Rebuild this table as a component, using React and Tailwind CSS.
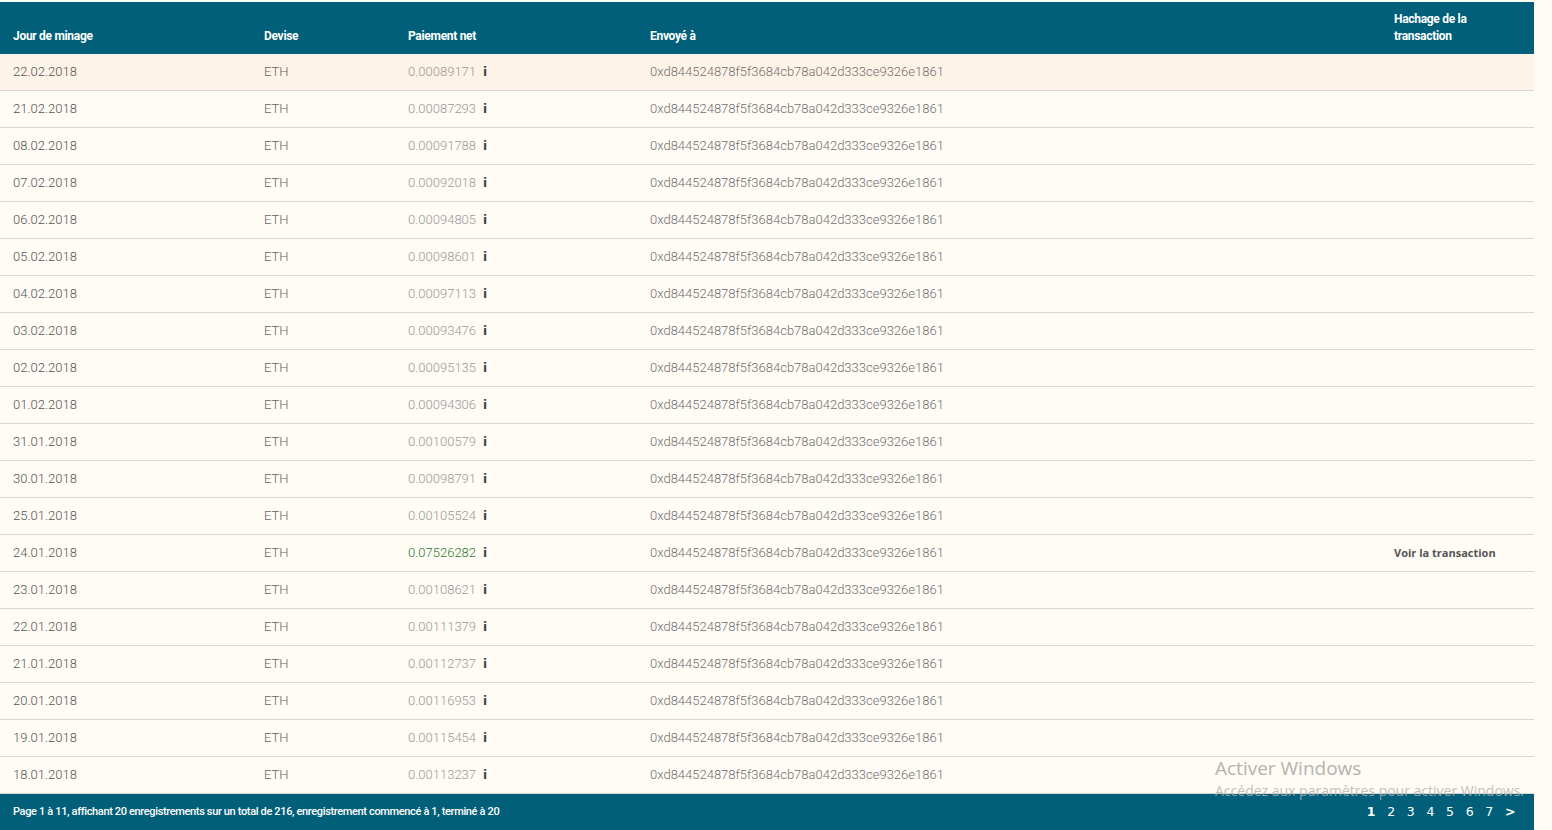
import React from "react";

const rows = [
  ["22.02.2018", "0.00089171"],
  ["21.02.2018", "0.00087293"],
  ["08.02.2018", "0.00091788"],
  ["07.02.2018", "0.00092018"],
  ["06.02.2018", "0.00094805"],
  ["05.02.2018", "0.00098601"],
  ["04.02.2018", "0.00097113"],
  ["03.02.2018", "0.00093476"],
  ["02.02.2018", "0.00095135"],
  ["01.02.2018", "0.00094306"],
  ["31.01.2018", "0.00100579"],
  ["30.01.2018", "0.00098791"],
  ["25.01.2018", "0.00105524"],
  ["24.01.2018", "0.07526282", true],
  ["23.01.2018", "0.00108621"],
  ["22.01.2018", "0.00111379"],
  ["21.01.2018", "0.00112737"],
  ["20.01.2018", "0.00116953"],
  ["19.01.2018", "0.00115454"],
  ["18.01.2018", "0.00113237"],
];

const HASH = "0xd844524878f5f3684cb78a042d333ce9326e1861";

export default function App() {
  return (
    <div
      className="relative w-[1552px] h-[830px] overflow-hidden bg-[#fffbf5] pt-[2px]"
      style={{ fontFamily: "Roboto, 'Liberation Sans', sans-serif" }}
    >
      <div className="w-[1534px]">
        <div className="flex items-end h-[52px] bg-[#015f7a] text-white font-bold text-[12px] leading-[17px] tracking-[-0.3px] pb-[9px]">
          <div className="w-[264px] pl-[13px]">Jour de minage</div>
          <div className="w-[144px]">Devise</div>
          <div className="w-[242px]">Paiement net</div>
          <div className="w-[744px]">Envoyé à</div>
          <div className="w-[120px]">Hachage de la<br />transaction</div>
        </div>
        {rows.map(([d, p, green], i) => (
          <div
            key={i}
            className={`flex items-center h-[37px] border-b border-[#d9d6d6] text-[13px] font-light ${i === 0 ? "bg-[#fdf3e6]" : ""}`}
          >
            <div className="w-[264px] pl-[13px] text-[#555]">{d}</div>
            <div className="w-[144px] text-[#666]">ETH</div>
            <div className="w-[242px] flex items-center">
              <span className={green ? "text-[#2e7d32]" : "text-[#9a9a9a]"}>{p}</span>
              <span className="ml-[7px] font-bold text-[#444] text-[12px]" style={{ fontFamily: "'DejaVu Sans', sans-serif" }}>i</span>
            </div>
            <div className="w-[744px] text-[#707070]">{HASH}</div>
            <div
              className="text-[11px] font-bold text-[#555]"
              style={{ fontFamily: "'Open Sans', sans-serif" }}
            >
              {green ? "Voir la transaction" : ""}
            </div>
          </div>
        ))}
        <div className="flex items-center justify-between h-[37px] bg-[#015f7a] text-white text-[11px] font-medium tracking-[-0.35px] pl-[13px] pr-[19px]">
          <div>Page 1 à 11, affichant 20 enregistrements sur un total de 216, enregistrement commencé à 1, terminé à 20</div>
          <div className="flex gap-[12px] text-[12.5px] font-bold" style={{ fontFamily: "'DejaVu Sans', sans-serif" }}>
            <span className="text-white">1</span>
            <span className="font-normal">2</span>
            <span className="font-normal">3</span>
            <span className="font-normal">4</span>
            <span className="font-normal">5</span>
            <span className="font-normal">6</span>
            <span className="font-normal">7</span>
            <span>&gt;</span>
          </div>
        </div>
      </div>
      <div
        className="absolute left-[1215px] top-[756px] text-[#b5b3b0] pointer-events-none"
        style={{ fontFamily: "'Open Sans', sans-serif" }}
      >
        <div className="text-[19px] leading-[24px]">Activer Windows</div>
        <div className="text-[14px] leading-[20px] mt-[1px] opacity-80">Accédez aux paramètres pour activer Windows.</div>
      </div>
    </div>
  );
}
